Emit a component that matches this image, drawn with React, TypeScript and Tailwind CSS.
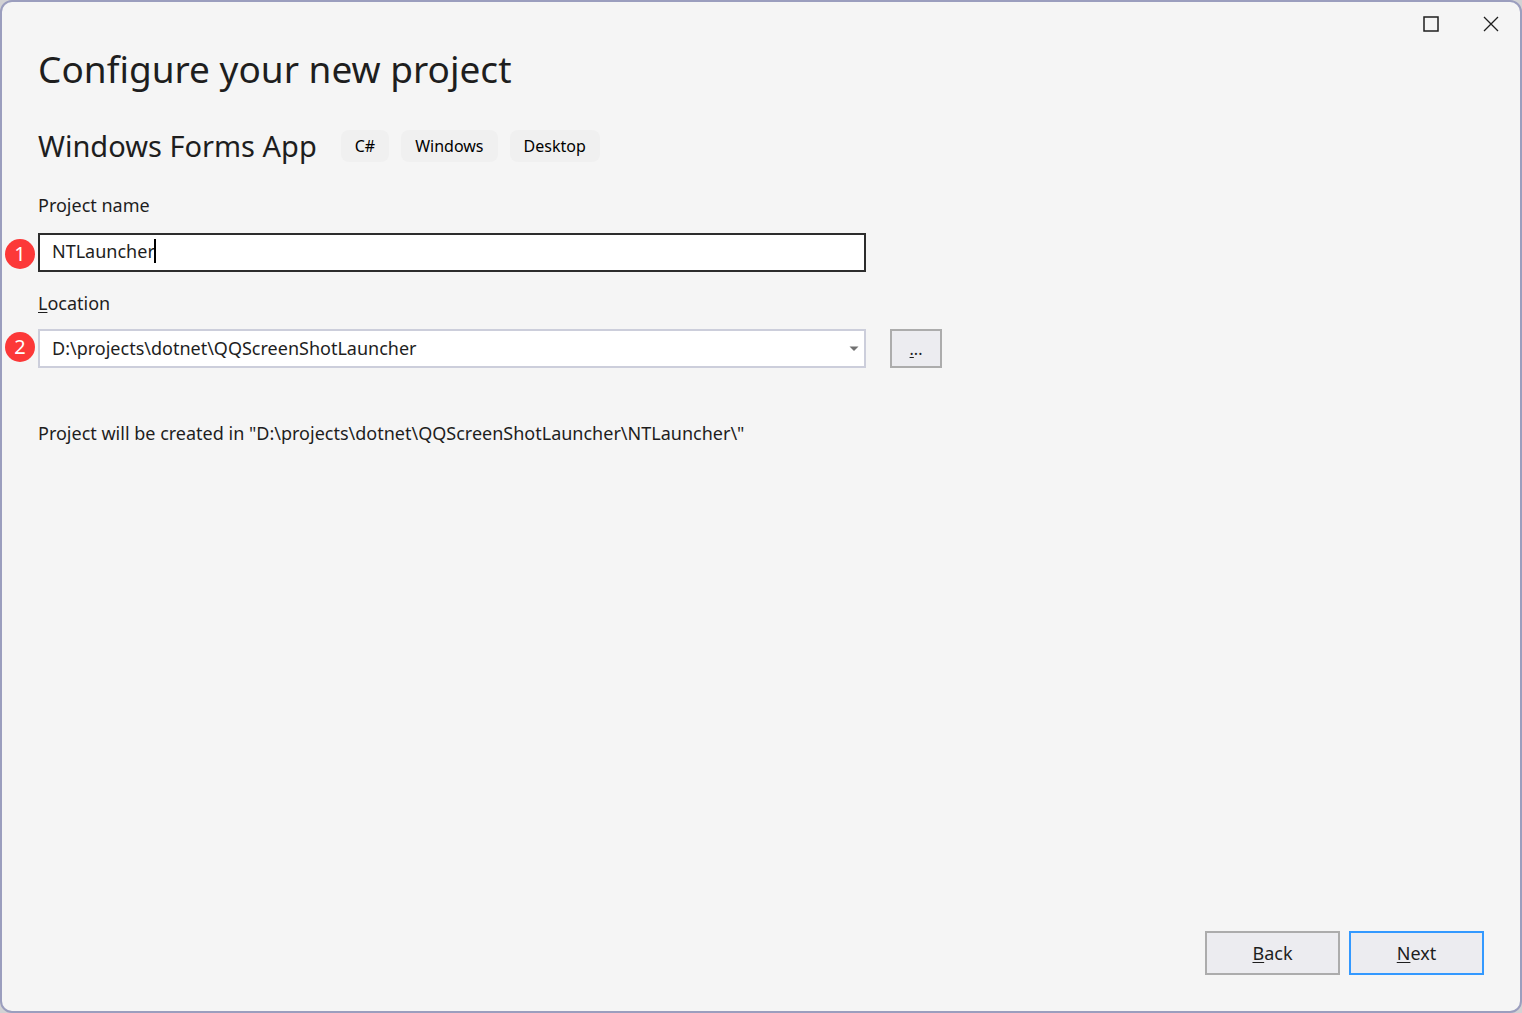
import { useState } from "react";

const parentFolder = "D:\\projects\\dotnet\\QQScreenShotLauncher";
const tags = ["C#", "Windows", "Desktop"];

function StepBadge({ step, place }: { step: number; place: string }) {
  return (
    <span
      className={`absolute -left-[35px] flex size-[30px] items-center justify-center rounded-full bg-[#fc3838] text-xl leading-6 text-white ${place}`}
    >
      {step}
    </span>
  );
}

function WindowControls() {
  return (
    <header className="flex justify-end">
      <button type="button" aria-label="Maximize" className="flex h-11 w-[60px] items-center justify-center">
        <svg width="18" height="16" viewBox="0 0 18 16" fill="none" stroke="#1e1e1e" strokeWidth="1.5">
          <rect x="3" y="1" width="14" height="14" />
        </svg>
      </button>
      <button type="button" aria-label="Close" className="flex h-11 w-[60px] items-center justify-center">
        <svg width="18" height="16" viewBox="0 0 18 16" fill="none" stroke="#1e1e1e" strokeWidth="1.3">
          <path d="M3 1L17 15M17 1L3 15" />
        </svg>
      </button>
    </header>
  );
}

export default function App() {
  const [name, setName] = useState("NTLauncher");
  return (
    <div className="min-h-screen bg-[#d2d2d4] font-['Noto_Sans','Open_Sans',sans-serif] text-lg leading-6 text-[#1e1e1e]">
      <div className="flex min-h-screen flex-col rounded-xl border-2 border-[#9b9ebe] bg-[#f5f5f5]">
        <WindowControls />
        <main className="flex flex-1 flex-col px-9 pb-9">
          <h1 className="text-[37px] leading-[46px]">Configure your new project</h1>

          <div className="mt-[38px] flex items-center gap-6">
            <h2 className="text-[29px] leading-8">Windows Forms App</h2>
            <ul className="flex gap-3">
              {tags.map((tag) => (
                <li key={tag} className="rounded-lg bg-[#f0f0f0] px-3.5 py-1 text-base text-black">
                  {tag}
                </li>
              ))}
            </ul>
          </div>

          <label htmlFor="name" className="mt-[31px] self-start">
            Pro<u className="underline-offset-2">j</u>ect name
          </label>
          <div className="relative mt-4 flex h-[39px] w-full max-w-[828px] items-center border-2 border-[#2d2d2d] bg-white pb-1 pl-3">
            <StepBadge step={1} place="top-1" />
            <input
              id="name"
              value={name}
              onChange={(e) => setName(e.target.value)}
              className="caret-transparent outline-none [field-sizing:content]"
            />
            <span className="-ml-px h-6 w-0.5 bg-black" />
          </div>

          <label htmlFor="location" className="mt-[19px] self-start">
            <u className="underline-offset-2">L</u>ocation
          </label>
          <div className="mt-3.5 flex gap-6">
            <div className="relative flex h-[39px] w-full max-w-[828px] items-center border-2 border-[#cccedb] bg-white">
              <StepBadge step={2} place="top-px" />
              <select id="location" className="h-full w-full appearance-none px-3 pb-0.5 outline-none">
                <option>{parentFolder}</option>
              </select>
              <svg className="pointer-events-none absolute right-[5px]" width="10" height="5" viewBox="0 0 10 5" fill="#717171">
                <path d="M0.5 0.5H9.5L5 5Z" />
              </svg>
            </div>
            <button
              type="button"
              aria-label="Browse"
              className="w-[52px] shrink-0 border-2 border-[#acacac] bg-[#ececf0] text-base"
            >
              <u className="underline-offset-2">.</u>..
            </button>
          </div>

          <p className="mt-[53px]">
            Project will be created in "{parentFolder}\{name}\"
          </p>

          <footer className="mt-auto flex justify-end gap-[9px]">
            <button type="button" className="h-11 w-[135px] border-2 border-[#acacac] bg-[#ececf0]">
              <u className="underline-offset-2">B</u>ack
            </button>
            <button type="button" className="h-11 w-[135px] border-2 border-[#3399ff] bg-[#ececf0]">
              <u className="underline-offset-2">N</u>ext
            </button>
          </footer>
        </main>
      </div>
    </div>
  );
}
